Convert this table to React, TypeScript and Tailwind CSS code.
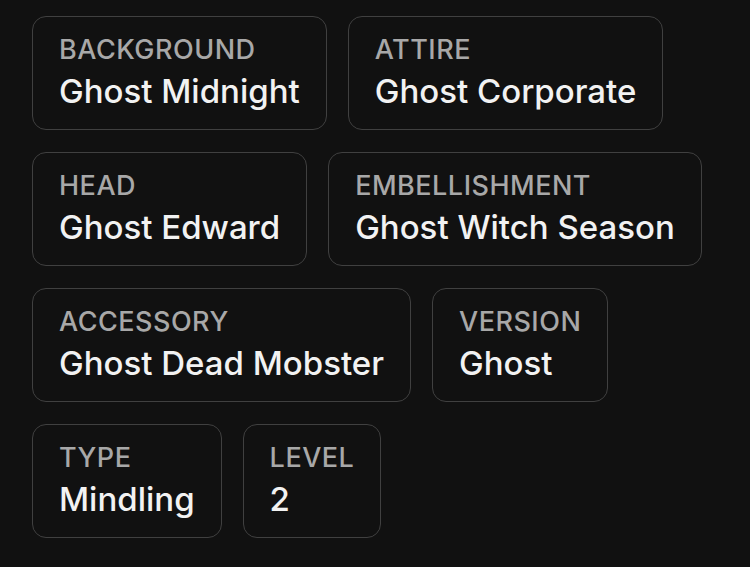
const rows: { label: string; value: string }[][] = [
  [
    { label: "Background", value: "Ghost Midnight" },
    { label: "Attire", value: "Ghost Corporate" }
  ],
  [
    { label: "Head", value: "Ghost Edward" },
    { label: "Embellishment", value: "Ghost Witch Season" }
  ],
  [
    { label: "Accessory", value: "Ghost Dead Mobster" },
    { label: "Version", value: "Ghost" }
  ],
  [
    { label: "Type", value: "Mindling" },
    { label: "Level", value: "2" }
  ]
];

const TraitCard = ({ label, value }: { label: string; value: string }) => (
  <div className="rounded-[14px] border border-[#404040] px-[26px] pt-[19px] pb-[21px]">
    <div className="text-[27px] leading-none font-medium uppercase tracking-[0.5px] text-[#a8a8a8]">
      {label}
    </div>
    <div className="mt-[12px] text-[33px] leading-none font-medium text-[#f2f2f2] whitespace-nowrap">
      {value}
    </div>
  </div>
);

export default function App() {
  return (
    <div
      className="w-[750px] h-[567px] bg-[#111111] pl-[32px] pt-[16px] flex flex-col gap-[22px]"
      style={{ fontFamily: "Inter, 'Noto Sans', sans-serif" }}>
      {rows.map((row, i) => (
        <div key={i} className="flex gap-[21px]">
          {row.map((t) => (
            <TraitCard key={t.label} label={t.label} value={t.value} />
          ))}
        </div>
      ))}
    </div>
  );
}
